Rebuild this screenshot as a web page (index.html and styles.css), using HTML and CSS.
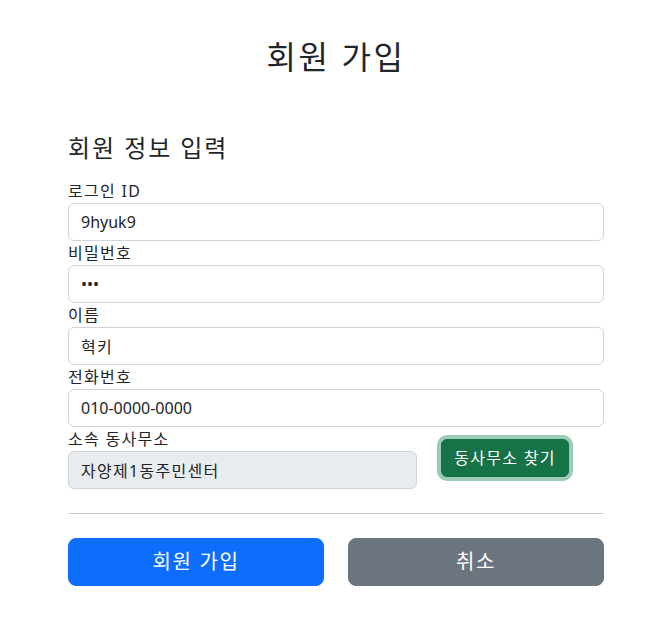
FILE: index.html
```html
<!DOCTYPE html>
<html lang="ko">
<head>
<meta charset="utf-8">
<title>회원 가입</title>
<link rel="stylesheet" href="styles.css">
</head>
<body>
<div class="container">
  <div class="header">
    <h2 class="page-title ko">회원 가입</h2>
  </div>
  <h4 class="section-title ko">회원 정보 입력</h4>
  <form class="form">
    <div class="field">
      <label class="form-label ko" for="loginId">로그인 ID</label>
      <input class="form-control" id="loginId" type="text" value="9hyuk9">
    </div>
    <div class="field">
      <label class="form-label ko" for="password">비밀번호</label>
      <input class="form-control" id="password" type="password" value="abc">
    </div>
    <div class="field">
      <label class="form-label ko" for="name">이름</label>
      <input class="form-control ko" id="name" type="text" value="혁키">
    </div>
    <div class="field">
      <label class="form-label ko" for="phone">전화번호</label>
      <input class="form-control" id="phone" type="text" value="010-0000-0000">
    </div>
    <div class="row office-row">
      <div class="col-8">
        <label class="form-label ko" for="office">소속 동사무소</label>
        <input class="form-control disabled ko" id="office" type="text" value="자양제1동주민센터" readonly>
      </div>
      <div class="col-4">
        <button type="button" class="btn btn-success focused ko">동사무소 찾기</button>
      </div>
    </div>
    <hr class="divider">
    <div class="row">
      <div class="col-6">
        <button type="button" class="btn btn-lg btn-primary full ko">회원 가입</button>
      </div>
      <div class="col-6">
        <button type="button" class="btn btn-lg btn-secondary full ko">취소</button>
      </div>
    </div>
  </form>
</div>
</body>
</html>
```

FILE: styles.css
```css
* { box-sizing: border-box; }

body {
  margin: 0;
  padding-left: 4px;
  font-family: "Noto Sans", "Noto Sans CJK KR", sans-serif;
  font-size: 16px;
  line-height: 1.5;
  color: #212529;
  background: #fff;
}

.ko { letter-spacing: 0.08em; }

.container {
  max-width: 560px;
  margin: 0 auto;
  padding: 0 12px;
}

.header {
  text-align: center;
  padding-top: 38px;
}

.page-title {
  margin: 0;
  font-size: 32px;
  font-weight: 400;
  line-height: 1.2;
}

.section-title {
  margin: 58px 0 16px;
  font-size: 24px;
  font-weight: 400;
  line-height: 1.2;
}

.form { margin: 0; }

.form-label {
  display: block;
  line-height: 24px;
}

.form-control {
  display: block;
  width: 100%;
  height: 38px;
  padding: 6px 12px;
  font-family: inherit;
  font-size: 16px;
  line-height: 24px;
  color: #212529;
  background: #fff;
  border: 1px solid #ced4da;
  border-radius: 6px;
  outline: none;
}

.form-control.disabled {
  background: #e9ecef;
}

.row {
  display: flex;
  margin: 0 -12px;
}

.office-row { align-items: center; }

.col-8 { flex: 0 0 66.6667%; padding: 0 12px; }
.col-4 { flex: 0 0 33.3333%; padding: 0 12px; }
.col-6 { flex: 0 0 50%; padding: 0 12px; }

.btn {
  display: inline-block;
  padding: 6px 12px;
  font-family: inherit;
  font-size: 16px;
  line-height: 24px;
  color: #fff;
  border: 1px solid transparent;
  border-radius: 6px;
  cursor: pointer;
}

.btn-success {
  background: #157347;
  border-color: #146c43;
}

.btn-success.focused {
  box-shadow: 0 0 0 4px rgba(60, 153, 110, 0.5);
}

.btn-lg {
  padding: 8px 16px;
  font-size: 20px;
  line-height: 30px;
  border-radius: 8px;
}

.btn-primary { background: #0d6efd; border-color: #0d6efd; }
.btn-secondary { background: #6c757d; border-color: #6c757d; }

.full { width: 100%; }

.divider {
  margin: 24px 0;
  border: 0;
  border-top: 1px solid #c8c9ca;
}
```
